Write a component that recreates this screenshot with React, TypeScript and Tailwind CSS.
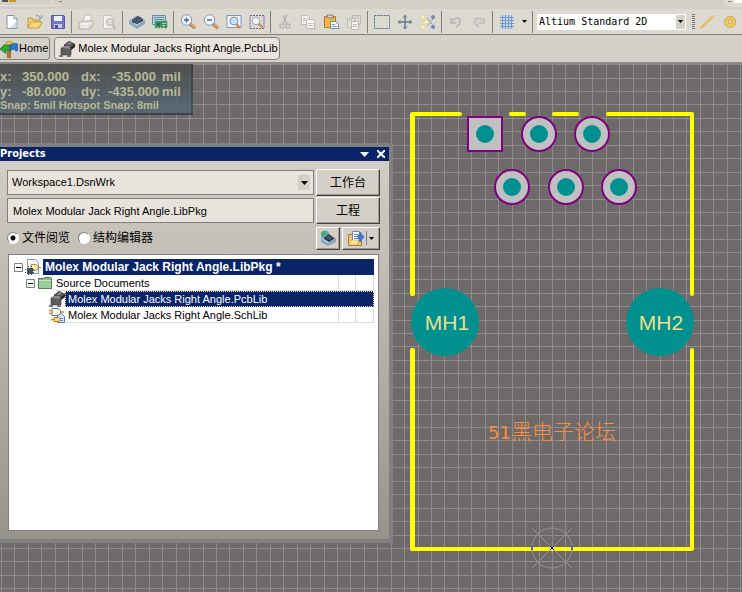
import React, { useState } from 'react';

const ORIGIN = { x: 552, y: 484 };
const STEP = 13.44;

const pads = [
  { x: 539, y: 70 },
  { x: 592, y: 70 },
  { x: 512, y: 123 },
  { x: 566, y: 123 },
  { x: 619, y: 123 },
];

const gridLines = (origin: number, count: number) =>
  Array.from({ length: count }, (_, i) => Math.round(origin + (i - 42) * STEP));

const Icon: React.FC<{ children: React.ReactNode; size?: number }> = ({ children, size = 16 }) => (
  <svg width={size} height={size} viewBox="0 0 16 16" fill="none" className="shrink-0">
    {children}
  </svg>
);

const Caret: React.FC = () => (
  <svg width="5" height="3" viewBox="0 0 5 3" className="shrink-0">
    <path d="M0 0h5L2.5 3z" fill="#000" />
  </svg>
);

/* ---- toolbar icons ---- */

const NewIcon = () => (
  <Icon>
    <path d="M3 1.5h7l3 3v10H3z" fill="#fcfdff" stroke="#8796b4" />
    <path d="M10 1.5v3h3" fill="#dce6f4" stroke="#8796b4" />
    <path d="M6 14h6V8z" fill="#c9d9ee" />
  </Icon>
);

const OpenIcon = () => (
  <Icon>
    <path d="M1 14V4h4l1 2h7v3" fill="#f5cf72" stroke="#b99545" />
    <path d="M1 14 4 8h11l-3 6z" fill="#fbd979" stroke="#c39a44" />
    <path d="M9 2c2-1 4 0 4.5 2M12 4h3V1" stroke="#7f95b8" />
  </Icon>
);

const SaveIcon = () => (
  <Icon>
    <path d="M1.5 1.5h12l1 1v12h-13z" fill="#7276ce" stroke="#5557a6" />
    <path d="M4 2h8v5H4z" fill="#eef2ff" />
    <path d="M4 10h8v4H4z" fill="#c5cdee" />
    <path d="M5 11h3v3H5z" fill="#4b4c95" />
  </Icon>
);

const PrintIcon = () => (
  <Icon>
    <path d="M5 8 7 1h7l-2 7z" fill="#f6f5f2" stroke="#bfbdb9" />
    <path d="M1 9l3-2h11v4l-3 4H1z" fill="#dddbd7" stroke="#b4b2ae" />
    <path d="M2 10h9l3-2M3 13h7" stroke="#fff" />
  </Icon>
);

const PreviewIcon = () => (
  <Icon>
    <path d="M2.5 1.5h7l3 3v10h-10z" fill="#f4f3f0" stroke="#c6c4c0" />
    <circle cx="9" cy="8" r="3.5" fill="#e0dfdc" stroke="#b4b2af" />
    <path d="m11.5 11 3 4" stroke="#b4b2af" strokeWidth="2" />
  </Icon>
);

const ChipIcon = () => (
  <Icon>
    <path d="M0 7v3l8 5 8-5V7l-8 5z" fill="#8fa6bf" />
    <path d="m0 7 8-5 8 5-8 5z" fill="#b7cbe0" stroke="#7b93ae" strokeWidth=".6" />
    <path d="m3 6 6-4 5 3v2L8 10 3 8z" fill="#2f3b4a" />
    <path d="m3 6 6-4 5 3-6 4z" fill="#526477" />
    <path d="m5 6 4-2.5M7 7l4-3" stroke="#1b2632" strokeDasharray="1 1" />
  </Icon>
);

const BoardIcon = () => (
  <Icon>
    <path d="M.5 1.5h13v9H.5z" fill="#b8cfdd" stroke="#6b8aa0" />
    <path d="M2 3.5h10M2 5.5h10" stroke="#6a94ab" />
    <path d="M3 7h12v7H3z" fill="#389168" stroke="#4f9c77" strokeWidth=".5" />
    <path d="M5 9h3v3H5z" fill="#246b4c" />
    <path d="M10 9.5h4M10 11.5h3M5.5 13v2M8.5 13v2M11.5 13v2" stroke="#bfdc9b" />
  </Icon>
);

const Lens: React.FC<{ sign: string }> = ({ sign }) => (
  <Icon>
    <path d="m10 10 5 4" stroke="#a96f3c" strokeWidth="3" />
    <path d="m11 10.5 4 3" stroke="#f3b873" strokeWidth="1.5" />
    <circle cx="6.5" cy="6" r="5.2" fill="#eef6ff" stroke="#8793b4" />
    <path d={sign} stroke="#52669a" strokeWidth="1.5" />
  </Icon>
);

const ZoomDocIcon = () => (
  <Icon>
    <path d="M1 1.5h14v12H1z" fill="#f5f8fd" stroke="#7f93b8" />
    <circle cx="8" cy="7" r="4" fill="#cfe1f5" stroke="#7e8fb4" />
    <path d="m10.5 10 3 4" stroke="#cf8541" strokeWidth="2.5" />
  </Icon>
);

const ZoomAreaIcon = () => (
  <Icon>
    <path d="M1 1.5h14v13H1z" stroke="#566a8f" strokeDasharray="2 1" />
    <circle cx="7" cy="7" r="3.8" fill="#f2f7fd" stroke="#92a3c2" />
    <path d="m9.5 10 4 3" stroke="#d98c43" strokeWidth="2.5" />
  </Icon>
);

const CutIcon = () => (
  <Icon>
    <path d="M10 1 6 10M6 1l4 9" stroke="#b4b3b3" strokeWidth="1.5" />
    <circle cx="5" cy="12" r="2" stroke="#b8b7b7" strokeWidth="1.5" />
    <circle cx="11" cy="12" r="2" stroke="#b8b7b7" strokeWidth="1.5" />
  </Icon>
);

const CopyIcon = () => (
  <Icon>
    <path d="M1.5 1.5h6l2 2v7h-8z" fill="#f0efed" stroke="#c0bfbb" />
    <path d="M6.5 5.5h6l2 2v7h-8z" fill="#f6f5f3" stroke="#bab9b6" />
    <path d="M3 4.5h3M3 6.5h3M8 9.5h5M8 11.5h5" stroke="#c0bfbc" />
  </Icon>
);

const PasteIcon = () => (
  <Icon>
    <path d="M1.5 2.5h11v11h-11z" fill="#efb944" stroke="#a97a2b" />
    <path d="M4 1h6v3H4z" fill="#d7d3c4" stroke="#79705c" strokeWidth=".8" />
    <path d="M7.5 7.5h5l3 3v4h-8z" fill="#f7faff" stroke="#6e86ab" />
    <path d="M9 10.5h3M9 12.5h5" stroke="#7f97bf" />
  </Icon>
);

const PasteArrayIcon = () => (
  <Icon>
    <path d="M6.5 1.5h8v9h-8z" fill="#dad8d5" stroke="#b8b7b4" />
    <path d="M1.5 4.5h7v9h-7z" fill="#e4e2df" stroke="#bbbab7" />
    <path d="M5.5 7.5h7v8h-7z" fill="#f5f4f2" stroke="#bbbab7" />
    <path d="M7 10.5h4M7 12.5h4M8 3.5h5M3 6.5h3" stroke="#bbbab7" />
  </Icon>
);

const SelectIcon = () => (
  <Icon>
    <path d="M.5 1.5h15v13H.5z" stroke="#566a90" strokeDasharray="2 1" />
  </Icon>
);

const MoveIcon = () => (
  <Icon>
    <path d="M8 1v14M1 8h14" stroke="#677995" strokeWidth="1.5" />
    <path d="m6 3.5 2-2 2 2M6 12.5l2 2 2-2M3.5 6l-2 2 2 2M12.5 6l2 2-2 2" stroke="#677995" />
  </Icon>
);

const DeselectIcon = () => (
  <Icon>
    <path d="m7 4 4 4-4 4M13 5l-3 3 3 3" stroke="#7c8ba5" strokeDasharray="2 1" />
    <circle cx="3" cy="3" r="2" fill="#fff7a6" stroke="#d5cd86" strokeWidth=".5" />
    <circle cx="6" cy="8" r="2" fill="#fff7a6" stroke="#d5cd86" strokeWidth=".5" />
    <circle cx="3" cy="13" r="2" fill="#fff7a6" stroke="#d5cd86" strokeWidth=".5" />
    <circle cx="13" cy="3" r="2" fill="#6f87b3" />
    <circle cx="13" cy="13" r="2" fill="#6f87b3" />
  </Icon>
);

const UndoIcon = () => (
  <Icon>
    <path d="M3 4v5h5M3 8c3-4 8-5 9-2s-1 5-4 7" stroke="#bdbcbb" strokeWidth="2" />
  </Icon>
);

const RedoIcon = () => (
  <Icon>
    <path d="M13 4v5H8M13 8C10 4 5 3 4 6s1 5 4 7" stroke="#c2c1bf" strokeWidth="2" />
  </Icon>
);

const GridIcon = () => (
  <Icon>
    <path
      d="M3.5 1v14M6.5 1v14M9.5 1v14M12.5 1v14M1 3.5h14M1 6.5h14M1 9.5h14M1 12.5h14"
      stroke="#6f98dd"
      strokeWidth="1.2"
    />
  </Icon>
);

const LineIcon = () => (
  <Icon>
    <path d="M2 14 14 2" stroke="#c99a55" strokeWidth="2.2" />
    <path d="M2 14 14 2" stroke="#ffce4d" strokeWidth="1.3" />
  </Icon>
);

const PadIcon = () => (
  <Icon>
    <circle cx="8" cy="8" r="3.7" stroke="#b9a27c" strokeWidth="4.6" />
    <circle cx="8" cy="8" r="3.7" stroke="#f7c744" strokeWidth="3" />
  </Icon>
);

/* ---- document icons ---- */

const HomeIcon = () => (
  <Icon size={18}>
    <path d="M6.5 5h3v11h-3z" fill="#b9732b" stroke="#774b20" strokeWidth=".5" />
    <path d="M5 2 9 1l4 2-3 3z" fill="#f0c33e" stroke="#9b7423" strokeWidth=".5" />
    <path d="m0 8 4-4 5 1v5l-4-1v3z" fill="#39a735" stroke="#176d1d" strokeWidth=".6" />
    <path d="m9 4 6-1 1 2v4l-2 1-1-2-4 1z" fill="#267bd4" stroke="#155095" strokeWidth=".6" />
  </Icon>
);

const PcbLibIcon = () => (
  <Icon>
    <path d="m5 4 5-4 6 3v3l-5 4-6-4z" fill="#242424" />
    <path d="m5 4 5-4 6 3-5 4z" fill="#555" />
    <path d="m8 3 3-2 2 1-3 2z" fill="#888" />
    <path d="M2 7h8l2 2v5H2z" fill="#5d5d5d" stroke="#333" strokeWidth=".6" />
    <path d="m2 7 2-2h6l2 3" fill="#8b8b8b" />
    <path d="M0 14h4v2H0zM8 14h4v2H8z" fill="#777" />
  </Icon>
);

const SchLibIcon = () => (
  <Icon>
    <path d="M8.5 6.5h4l3 3v6h-7z" fill="#d9e8ff" stroke="#4f7cc0" />
    <path d="M10 11.5h4M10 13.5h4" stroke="#4b8bdd" />
    <path d="M3 1.5h5c5 0 5 7 0 7H3z" fill="#fff8d4" stroke="#377bc4" />
    <path d="M0 3.5h3M0 6.5h3M12 5h3M2 12.5h4" stroke="#e18b22" strokeWidth="1.5" />
    <path d="M5 10.5h4c3 0 3 4 0 4H5z" fill="#ffdc78" stroke="#c17a2a" />
  </Icon>
);

const LibPkgIcon = () => (
  <Icon>
    <path d="M2.5.5h8l3 3v11h-11z" fill="#f5f9ff" stroke="#819abf" />
    <path d="M6 5.5h4c4 0 4 6 0 6H6z" fill="#fff1ae" stroke="#cc842d" />
    <path d="M13 8.5h3" stroke="#d67422" />
    <path d="M2 9h6v6H2z" fill="#414c5d" />
    <path d="M0 10.5h10M0 13.5h10M3.5 7v9M6.5 7v9" stroke="#414c5d" strokeDasharray="1 1" />
  </Icon>
);

const FolderIcon = () => (
  <Icon>
    <path d="M1.5 3.5h5l1-1h6l1 1v10h-13z" fill="#83bd85" stroke="#4f7f52" />
    <path d="M2 5h12v8H2z" fill="#9acd99" />
    <path d="M2 5.5h12" stroke="#c7e6c4" />
  </Icon>
);

const CompileIcon = () => (
  <Icon>
    <path d="M1 9v3l7 4 8-4V9l-8 4z" fill="#8ba8c5" />
    <path d="m1 9 7-4 8 4-8 5z" fill="#b9cfe4" stroke="#617c99" strokeWidth=".5" />
    <circle cx="5" cy="4.5" r="4" fill="#5aa3d8" />
    <path d="M2 2c2-2 3-1 3 1S3 5 2 7L1 4zM6 3l3 1-2 3z" fill="#46b04e" />
    <path d="m4 8 5-4 5 4v1l-5 3-5-3z" fill="#27323f" />
    <path d="m5 8 4-3 4 3-4 2z" fill="#46566a" />
  </Icon>
);

const DocsIcon = () => (
  <Icon>
    <path d="M.5 4.5h5l1 2h7v9H.5z" fill="#f3c964" stroke="#a67e31" />
    <path d="M4.5 1.5h7v10h-7z" fill="#fff" stroke="#6e87b7" />
    <path d="M6 4.5h4M6 6.5h4M6 8.5h4" stroke="#6a87c8" />
    <path d="M10 5h2V2l4 5-4 5V9h-2z" fill="#3a7bdb" stroke="#2557a6" strokeWidth=".5" />
    <path d="m.5 15 3-5h7l-1 5z" fill="#ffe39b" stroke="#b88c3a" strokeWidth=".5" />
  </Icon>
);

const toolGroups: { label: string; icon: React.ReactNode }[][] = [
  [
    { label: 'New', icon: <NewIcon /> },
    { label: 'Open', icon: <OpenIcon /> },
    { label: 'Save', icon: <SaveIcon /> },
  ],
  [
    { label: 'Print', icon: <PrintIcon /> },
    { label: 'Preview', icon: <PreviewIcon /> },
  ],
  [
    { label: 'Devices', icon: <ChipIcon /> },
    { label: 'Board', icon: <BoardIcon /> },
  ],
  [
    { label: 'Zoom in', icon: <Lens sign="M4 6h5M6.5 3.5v5" /> },
    { label: 'Zoom out', icon: <Lens sign="M4 6h5" /> },
    { label: 'Fit document', icon: <ZoomDocIcon /> },
    { label: 'Zoom area', icon: <ZoomAreaIcon /> },
  ],
  [
    { label: 'Cut', icon: <CutIcon /> },
    { label: 'Copy', icon: <CopyIcon /> },
    { label: 'Paste', icon: <PasteIcon /> },
    { label: 'Paste array', icon: <PasteArrayIcon /> },
  ],
  [
    { label: 'Select', icon: <SelectIcon /> },
    { label: 'Move', icon: <MoveIcon /> },
    { label: 'Deselect', icon: <DeselectIcon /> },
  ],
  [
    { label: 'Undo', icon: <UndoIcon /> },
    { label: 'Redo', icon: <RedoIcon /> },
  ],
];

const ToolButton: React.FC<{ label: string; children: React.ReactNode }> = ({ label, children }) => (
  <button type="button" aria-label={label} className="flex h-6 w-[23px] shrink-0 items-center justify-center">
    {children}
  </button>
);

const Separator: React.FC = () => <span className="mx-[2px] h-[22px] w-px shrink-0 bg-[#808080]" />;

const Toolbar: React.FC = () => (
  <div className="flex h-[25px] items-center overflow-hidden bg-[#dcd9d1]">
    {toolGroups.map((group, i) => (
      <React.Fragment key={i}>
        {group.map((tool) => (
          <ToolButton key={tool.label} label={tool.label}>
            {tool.icon}
          </ToolButton>
        ))}
        <Separator />
      </React.Fragment>
    ))}
    <ToolButton label="Grid">
      <GridIcon />
    </ToolButton>
    <button type="button" aria-label="Grid options" className="flex h-6 w-3 shrink-0 items-center justify-center">
      <Caret />
    </button>
    <Separator />
    <div className="relative mx-[2px] w-[149px] shrink-0">
      <select
        aria-label="View configuration"
        className="block h-4 w-full appearance-none bg-white pl-[2px] font-['DejaVu_Sans_Mono',monospace] text-[10px] leading-4 text-black"
      >
        <option>Altium Standard 2D</option>
      </select>
      <span className="pointer-events-none absolute inset-y-px right-px flex w-[9px] items-center justify-center bg-[#d4d0c8]">
        <Caret />
      </span>
    </div>
    <span className="ml-1 h-4 w-[3px] shrink-0 bg-[repeating-linear-gradient(#777_0_1px,transparent_1px_2px)]" />
    <ToolButton label="Place line">
      <LineIcon />
    </ToolButton>
    <ToolButton label="Place pad">
      <PadIcon />
    </ToolButton>
  </div>
);

const DocumentTabs: React.FC = () => (
  <div className="flex h-[30px] items-center gap-1 border-t border-[#808080] border-b-2 border-b-[#8a8785] bg-[#d4d0c8]">
    <button
      type="button"
      className="flex h-[23px] shrink-0 items-center gap-px rounded-r-sm border border-l-0 border-[#808080] pr-px text-[11px]"
    >
      <HomeIcon />
      Home
    </button>
    <button
      type="button"
      className="flex h-[23px] shrink-0 items-center gap-[3px] rounded-sm border border-[#808080] bg-[#e8e4dc] pl-1 pr-px text-[11px]"
    >
      <PcbLibIcon />
      Molex Modular Jacks Right Angle.PcbLib
    </button>
  </div>
);

const Footprint: React.FC = () => (
  <svg className="absolute inset-0 h-full w-full">
    <g shapeRendering="crispEdges" fill="#8e8b8f">
      {gridLines(ORIGIN.x, 160).map((x) => (
        <rect key={x} x={x} y="0" width="1" height="100%" />
      ))}
      {gridLines(ORIGIN.y, 120).map((y) => (
        <rect key={y} x="0" y={y} width="100%" height="1" />
      ))}
    </g>
    <g stroke="#ffff00" strokeWidth="4" strokeLinecap="round" strokeLinejoin="round" fill="none">
      <path d="M412 230V50H460M511 50h13M554 50h23M608 50h84v180M692 286v199H412V286" />
      <path d="M413 230V50M413 286v199" />
    </g>
    <rect x="468" y="53" width="34" height="34" fill="#c0c0c0" stroke="#800080" strokeWidth="2" />
    <circle cx="485" cy="70" r="9" fill="#009090" />
    {pads.map((pad) => (
      <g key={`${pad.x}-${pad.y}`}>
        <circle cx={pad.x} cy={pad.y} r="17" fill="#c0c0c0" stroke="#800080" strokeWidth="2" />
        <circle cx={pad.x} cy={pad.y} r="9" fill="#009090" />
      </g>
    ))}
    <circle cx="445" cy="258" r="34" fill="#009090" />
    <circle cx="660" cy="258" r="34" fill="#009090" />
    <g fill="#ecdf8c" textAnchor="middle" className="font-['Liberation_Sans',sans-serif] text-[21px]">
      <text x="447" y="266">MH1</text>
      <text x="661" y="266">MH2</text>
    </g>
    <text x="488" y="375" fill="#ff8a3c" className="font-['Noto_Sans_CJK_SC',sans-serif] text-[21px] font-light">
      <tspan className="font-['DejaVu_Sans',sans-serif] text-[18px] font-normal">51</tspan>
      黑电子论坛
    </text>
    <g stroke="#949494" fill="none">
      <circle cx="552" cy="484" r="20" />
      <path d="m532 464 40 40M572 464l-40 40" />
    </g>
    <path d="M532 482v4M572 482v4M550 482l4 4M554 482l-4 4" stroke="#0000ff" />
  </svg>
);

const Readout: React.FC = () => (
  <div className="relative h-[51px] w-[193px] overflow-hidden border-r-2 border-b-2 border-black/20 bg-linear-to-b from-[#4b4b48]/85 to-[#536878]/85 pt-[5px] font-bold text-[#b9b894]">
    <div className="grid grid-cols-[16px_56px_36px_54px_auto] text-[13px] leading-[15px]">
      <span>x:</span>
      <span className="pl-[6px]">350.000</span>
      <span className="pl-[9px]">dx:</span>
      <span className="pr-[6px] text-right">-35.000</span>
      <span>mil</span>
      <span>y:</span>
      <span className="pl-[6px]">-80.000</span>
      <span className="pl-[9px]">dy:</span>
      <span className="pr-[4px] text-right">-435.000</span>
      <span>mil</span>
    </div>
    <p className="text-[11px] leading-[13px] whitespace-nowrap">Snap: 5mil Hotspot Snap: 8mil</p>
  </div>
);

const RaisedButton: React.FC<{ children: React.ReactNode; label?: string; className?: string }> = ({
  children,
  label,
  className = '',
}) => (
  <button
    type="button"
    aria-label={label}
    className={`flex items-center justify-center border border-t-white border-l-white border-r-[#404040] border-b-[#404040] bg-[#d4d0c8] shadow-[inset_-1px_-1px_#a09c94] ${className}`}
  >
    {children}
  </button>
);

const Expander: React.FC = () => (
  <svg width="9" height="9" viewBox="0 0 9 9" className="shrink-0">
    <path d="M.5.5h8v8h-8z" fill="#fff" stroke="#808080" />
    <path d="M2 4.5h5" stroke="#000" />
  </svg>
);

const TreeCells: React.FC = () => (
  <>
    <span className="w-[18px] shrink-0 border-r border-b border-l border-[#dcdcdc]" />
    <span className="w-[18px] shrink-0 border-r border-b border-[#dcdcdc]" />
  </>
);

const ProjectTree: React.FC = () => (
  <ul className="h-[277px] overflow-hidden border border-[#808080] bg-white pt-1 pr-1 pl-[5px] text-[11px] leading-4 whitespace-nowrap">
    <li className="flex h-4 items-center">
      <Expander />
      <span className="flex px-[2px]">
        <LibPkgIcon />
      </span>
      <span className="flex-1 bg-[#0a246a] pl-[2px] text-[12px] font-bold text-white">
        Molex Modular Jack Right Angle.LibPkg *
      </span>
    </li>
    <li className="flex h-4 pl-3">
      <span className="flex items-center gap-[2px] pr-[3px]">
        <Expander />
        <FolderIcon />
      </span>
      <span className="flex-1 border-b border-[#dcdcdc]">Source Documents</span>
      <TreeCells />
    </li>
    <li className="flex h-4 pl-[35px]">
      <PcbLibIcon />
      <span className="flex-1 border border-dotted border-[#f5db95] bg-[#0a246a] pl-[2px] leading-[14px] text-white">
        Molex Modular Jacks Right Angle.PcbLib
      </span>
    </li>
    <li className="flex h-4 pl-[35px]">
      <SchLibIcon />
      <span className="flex-1 border-b border-[#dcdcdc] pl-[3px]">Molex Modular Jacks Right Angle.SchLib</span>
      <TreeCells />
    </li>
  </ul>
);

const ViewRadio: React.FC<{ label: string; checked: boolean; onChange: () => void }> = ({
  label,
  checked,
  onChange,
}) => (
  <label className="flex items-center gap-[3px]">
    <input
      type="radio"
      name="view"
      checked={checked}
      onChange={onChange}
      className="m-0 size-3 appearance-none rounded-full border border-t-[#808080] border-l-[#808080] border-r-white border-b-white bg-white checked:bg-[radial-gradient(#000_2px,#fff_3px)]"
    />
    {label}
  </label>
);

const ProjectsPanel: React.FC = () => {
  const [view, setView] = useState('file');

  return (
    <section className="relative mt-7 w-[393px] border-4 border-l-0 border-[#808080] bg-linear-to-b from-[#d4d0c8] to-[#98948c] font-['Liberation_Sans','Noto_Sans_CJK_SC',sans-serif]">
      <header className="flex h-[14px] items-center bg-[#0a246a] pr-1 text-white">
        <h2 className="flex-1 font-['DejaVu_Sans_Condensed','DejaVu_Sans',sans-serif] text-[11px] font-bold">
          Projects
        </h2>
        <button type="button" aria-label="Panel menu" className="px-2">
          <svg width="9" height="5" viewBox="0 0 9 5">
            <path d="M0 0h9L4.5 5z" fill="#fff" />
          </svg>
        </button>
        <button type="button" aria-label="Close">
          <svg width="8" height="8" viewBox="0 0 8 8">
            <path d="m0 0 8 8M8 0 0 8" stroke="#fff" strokeWidth="2" />
          </svg>
        </button>
      </header>

      <div className="pt-2 pr-[9px] pb-2 pl-[7px]">
        <div className="grid grid-cols-[1fr_64px] items-center gap-x-[2px] gap-y-px text-[12px]">
          <div className="relative">
            <select
              aria-label="Workspace"
              className="block h-[25px] w-full appearance-none border border-[#808080] bg-[#e8e4dc] pl-1 text-[11px]"
            >
              <option>Workspace1.DsnWrk</option>
            </select>
            <span className="pointer-events-none absolute inset-y-[5px] right-1 flex w-3 items-center justify-center bg-[#d4d0c8]">
              <svg width="7" height="4" viewBox="0 0 7 4">
                <path d="M0 0h7L3.5 4z" />
              </svg>
            </span>
          </div>
          <RaisedButton className="h-[27px]">工作台</RaisedButton>
          <input
            aria-label="Project"
            readOnly
            value="Molex Modular Jack Right Angle.LibPkg"
            className="h-[25px] w-full min-w-0 border border-[#808080] bg-[#e8e4dc] pl-[5px] text-[11px]"
          />
          <RaisedButton className="h-[27px]">工程</RaisedButton>
        </div>

        <div className="my-[2px] flex h-6 items-center text-[12px]">
          <fieldset className="flex flex-1 items-center gap-2">
            <ViewRadio label="文件阅览" checked={view === 'file'} onChange={() => setView('file')} />
            <ViewRadio label="结构编辑器" checked={view === 'structure'} onChange={() => setView('structure')} />
          </fieldset>
          <RaisedButton label="Compile" className="mr-[2px] h-[23px] w-6">
            <CompileIcon />
          </RaisedButton>
          <RaisedButton label="Open documents" className="h-[23px] w-[38px] gap-[2px]">
            <DocsIcon />
            <span className="h-[14px] w-px bg-[#808080]" />
            <Caret />
          </RaisedButton>
        </div>

        <div className="px-px pt-[2px]">
          <ProjectTree />
        </div>
      </div>
    </section>
  );
};

export default function App() {
  return (
    <div className="flex min-h-screen flex-col overflow-hidden bg-[#d4d0c8] font-['Liberation_Sans',sans-serif] text-black">
      {/* lower edge of the menu row */}
      <div className="flex h-[9px] items-start justify-between">
        <div className="flex h-[6px] w-[62px] items-start border-b border-[#e4e1da]">
          <span className="ml-[2px] h-[2px] w-[6px] bg-[#555]" />
          <span className="ml-px h-[2px] w-[7px] bg-[#c99b26]" />
          <span className="ml-auto h-[5px] w-2 rounded-bl border-l border-[#e4e1da]" />
          <span className="mt-px h-px w-[3px] bg-[#808080]" />
        </div>
        <div className="flex h-[7px] w-[18px] items-start rounded-bl bg-[#dcd9d1] pl-1">
          <span className="mt-px h-px w-[3px] bg-[#808080]" />
          <span className="ml-[3px] h-[3px] flex-1 bg-white" />
        </div>
      </div>
      <Toolbar />
      <DocumentTabs />
      <main className="relative flex-1 bg-[#6e6a69] pb-12">
        <Footprint />
        <Readout />
        <ProjectsPanel />
      </main>
    </div>
  );
}
